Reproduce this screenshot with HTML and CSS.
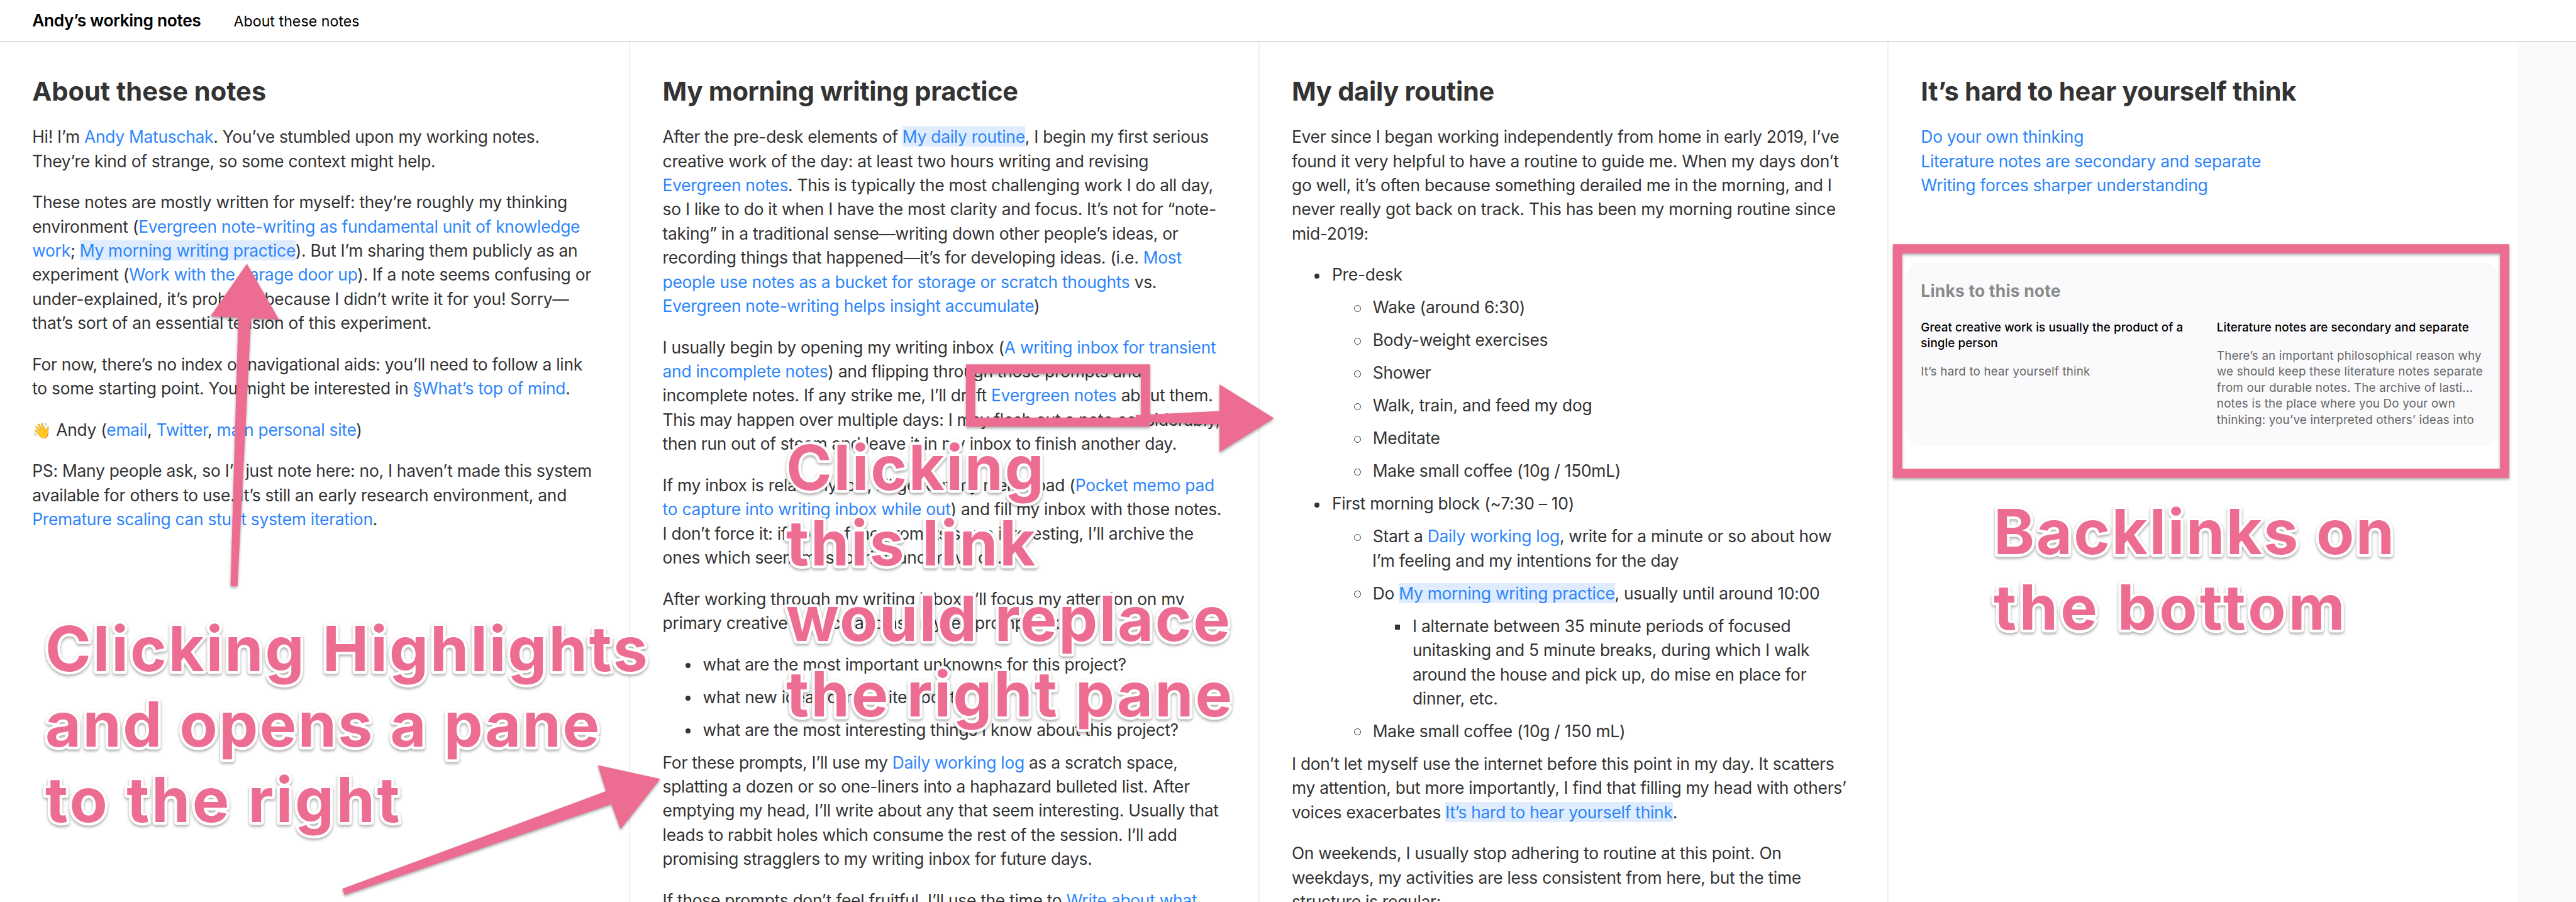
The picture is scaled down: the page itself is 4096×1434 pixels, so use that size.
FILE: index.html
```html
<!DOCTYPE html>
<html lang="en">
<head>
<meta charset="utf-8">
<title>Andy’s working notes</title>
<link rel="stylesheet" href="styles.css">
</head>
<body>
<header class="topbar">
  <a class="site-title">Andy’s working notes</a>
  <a class="nav-link">About these notes</a>
</header>
<main class="panes">
  <article class="note">
    <h1>About these notes</h1>
    <p>Hi! I’m <a>Andy Matuschak</a>. You’ve stumbled upon my working notes.<br>They’re kind of strange, so some context might help.</p>
    <p>These notes are mostly written for myself: they’re roughly my thinking<br>environment (<a>Evergreen note-writing as fundamental unit of knowledge<br>work</a>; <a class="open">My morning writing practice</a>). But I’m sharing them publicly as an<br>experiment (<a>Work with the garage door up</a>). If a note seems confusing or<br>under-explained, it’s probably because I didn’t write it for you! Sorry—<br>that’s sort of an essential tension of this experiment.</p>
    <p>For now, there’s no index or navigational aids: you’ll need to follow a link<br>to some starting point. You might be interested in <a>§What’s top of mind</a>.</p>
    <p><span class="wave">👋</span> Andy (<a>email</a>, <a>Twitter</a>, <a>main personal site</a>)</p>
    <p>PS: Many people ask, so I’ll just note here: no, I haven’t made this system<br>available for others to use. It’s still an early research environment, and<br><a>Premature scaling can stunt system iteration</a>.</p>
  </article>

  <article class="note">
    <h1>My morning writing practice</h1>
    <p>After the pre-desk elements of <a class="open">My daily routine</a>, I begin my first serious<br>creative work of the day: at least two hours writing and revising<br><a>Evergreen notes</a>. This is typically the most challenging work I do all day,<br>so I like to do it when I have the most clarity and focus. It’s not for “note-<br>taking” in a traditional sense—writing down other people’s ideas, or<br>recording things that happened—it’s for developing ideas. (i.e. <a>Most<br>people use notes as a bucket for storage or scratch thoughts</a> vs.<br><a>Evergreen note-writing helps insight accumulate</a>)</p>
    <p>I usually begin by opening my writing inbox (<a>A writing inbox for transient<br>and incomplete notes</a>) and flipping through those prompts and<br>incomplete notes. If any strike me, I’ll draft <a>Evergreen notes</a> about them.<br>This may happen over multiple days: I may flesh out a note considerably,<br>then run out of steam and leave it in my inbox to finish another day.</p>
    <p>If my inbox is relatively low, I’ll get out my memo pad (<a>Pocket memo pad<br>to capture into writing inbox while out</a>) and fill my inbox with those notes.<br>I don’t force it: if none of the prompts seem interesting, I’ll archive the<br>ones which seem most boring and move on.</p>
    <p>After working through my writing inbox, I’ll focus my attention on my<br>primary creative project, and ask myself prompts like:</p>
    <ul>
      <li>what are the most important unknowns for this project?</li>
      <li>what new ideas can I write about?</li>
      <li>what are the most interesting things I know about this project?</li>
    </ul>
    <p>For these prompts, I’ll use my <a>Daily working log</a> as a scratch space,<br>splatting a dozen or so one-liners into a haphazard bulleted list. After<br>emptying my head, I’ll write about any that seem interesting. Usually that<br>leads to rabbit holes which consume the rest of the session. I’ll add<br>promising stragglers to my writing inbox for future days.</p>
    <p>If those prompts don’t feel fruitful, I’ll use the time to <a>Write about what</a></p>
  </article>

  <article class="note">
    <h1>My daily routine</h1>
    <p>Ever since I began working independently from home in early 2019, I’ve<br>found it very helpful to have a routine to guide me. When my days don’t<br>go well, it’s often because something derailed me in the morning, and I<br>never really got back on track. This has been my morning routine since<br>mid-2019:</p>
    <ul>
      <li>Pre-desk
        <ul>
          <li>Wake (around 6:30)</li>
          <li>Body-weight exercises</li>
          <li>Shower</li>
          <li>Walk, train, and feed my dog</li>
          <li>Meditate</li>
          <li>Make small coffee (10g / 150mL)</li>
        </ul>
      </li>
      <li>First morning block (~7:30 – 10)
        <ul>
          <li>Start a <a>Daily working log</a>, write for a minute or so about how<br>I’m feeling and my intentions for the day</li>
          <li>Do <a class="open">My morning writing practice</a>, usually until around 10:00
            <ul>
              <li>I alternate between 35 minute periods of focused<br>unitasking and 5 minute breaks, during which I walk<br>around the house and pick up, do mise en place for<br>dinner, etc.</li>
            </ul>
          </li>
          <li>Make small coffee (10g / 150 mL)</li>
        </ul>
      </li>
    </ul>
    <p>I don’t let myself use the internet before this point in my day. It scatters<br>my attention, but more importantly, I find that filling my head with others’<br>voices exacerbates <a class="open">It’s hard to hear yourself think</a>.</p>
    <p>On weekends, I usually stop adhering to routine at this point. On<br>weekdays, my activities are less consistent from here, but the time<br>structure is regular:</p>
  </article>

  <article class="note">
    <h1>It’s hard to hear yourself think</h1>
    <p><a>Do your own thinking</a><br><a>Literature notes are secondary and separate</a><br><a>Writing forces sharper understanding</a></p>
    <section class="backlinks">
      <h2>Links to this note</h2>
      <div class="backlink-grid">
        <div class="backlink">
          <h3>Great creative work is usually the product of a<br>single person</h3>
          <div class="excerpt">It’s hard to hear yourself think</div>
        </div>
        <div class="backlink">
          <h3>Literature notes are secondary and separate</h3>
          <div class="excerpt">There’s an important philosophical reason why<br>we should keep these literature notes separate<br>from our durable notes. The archive of lasti...<br>notes is the place where you Do your own<br>thinking: you’ve interpreted others’ ideas into</div>
        </div>
      </div>
    </section>
  </article>
</main>

<svg class="annotations" viewBox="0 0 5118 1792" preserveAspectRatio="none">
  <g class="shapes">
    <polygon points="490.6,524 418,628.5 473.5,631.2 458,1164 471.8,1164.6 498.8,632.3 554.3,634.8"/>
    <polygon points="1311.8,1547.4 1187.8,1520.1 1204,1571.9 680,1765.9 684.9,1777.8 1214.7,1597.5 1232.7,1647.5"/>
    <rect class="box" x="1928.3" y="733" width="347.6" height="105.6"/>
    <polygon points="2531,830.6 2422.9,763.4 2422.9,816.8 2256.3,824.8 2256.3,838 2422.9,843.4 2422.9,898.3"/>
    <rect class="box" x="3770" y="494.2" width="1206.2" height="446.2"/>
  </g>
  <g class="callouts">
    <text x="90" y="1333.5" textLength="1197">Clicking Highlights</text>
    <text x="90" y="1483.5" textLength="1101">and opens a pane</text>
    <text x="90" y="1633.5" textLength="704">to the right</text>
    <text x="1562" y="973" textLength="512">Clicking</text>
    <text x="1562" y="1123" textLength="495">this link</text>
    <text x="1562" y="1273" textLength="882">would replace</text>
    <text x="1562" y="1423" textLength="886">the right pane</text>
    <text x="3961" y="1100.5" textLength="796">Backlinks on</text>
    <text x="3961" y="1250.5" textLength="698">the bottom</text>
  </g>
</svg>
</body>
</html>
```
FILE: styles.css
```css
* { box-sizing: border-box; }

body {
  margin: 0;
  width: 4096px;
  height: 1434px;
  overflow: hidden;
  position: relative;
  display: flex;
  flex-direction: column;
  background: #fafafc;
  color: #333;
  font: 400 26.4px/38.41px Inter, "Liberation Sans", sans-serif;
  letter-spacing: -0.275px;
}

.topbar {
  flex: none;
  height: 67px;
  padding: 8.5px 51.2px 0;
  display: flex;
  align-items: baseline;
  gap: 52px;
  background: #fff;
  border-bottom: 2px solid #dcdcdc;
  color: #000;
  line-height: 46px;
}
.site-title { font-weight: 600; letter-spacing: -0.38px; }
.nav-link { font-size: 23.2px; font-weight: 400; letter-spacing: 0.02px; }

.panes { display: flex; flex: 1; min-height: 0; }

.note {
  flex: none;
  width: 1000.4px;
  padding: 52.2px 51.2px 0;
  overflow: hidden;
  background: #fff;
  border-left: 2px solid #eee;
  white-space: nowrap;
}
.note:first-child { border-left: 0; }

h1 {
  margin: 0 0 27px;
  font-size: 41.6px;
  line-height: 52px;
  font-weight: 700;
  letter-spacing: -0.3px;
}
.note:first-child h1 { letter-spacing: 0; }

p { margin: 0 0 27.2px; }
.note a { color: #2e85fb; }
.note a.open { background: #dfecfd; }
.wave { font-size: 24.5px; letter-spacing: 0; line-height: 1; }

ul { margin: 0; padding-left: 64px; list-style: none; }
li { margin: 13.6px 0; }
li::before {
  content: "";
  display: inline-block;
  width: 8px;
  height: 8px;
  margin: 0 19.6px 0 -27.6px;
  vertical-align: 3.4px;
  border-radius: 50%;
  background: #333;
}
li li::before {
  width: 9px;
  height: 9px;
  margin: 0 19px 0 -29.2px;
  vertical-align: 2.8px;
  border: 1.6px solid #333;
  background: none;
}
li li li::before {
  width: 8px;
  height: 8px;
  margin: 0 19.6px 0 -27.6px;
  vertical-align: 3.4px;
  border: 0;
  border-radius: 0;
  background: #333;
}

.backlinks {
  margin: 103.5px -24px 0;
  height: 292px;
  padding: 29.2px 24px 0;
  border-radius: 26px;
  background: #fafafc;
}
.backlinks h2 {
  margin: 0 0 29.8px;
  font-size: 26.4px;
  line-height: 32px;
  font-weight: 700;
  letter-spacing: 0.2px;
  color: #8a8a8a;
}
.backlink-grid {
  display: grid;
  grid-template-columns: 1fr 1fr;
  gap: 45px;
  font-size: 18.8px;
  line-height: 25.6px;
}
.backlink h3 {
  margin: 0 0 19.2px;
  font-size: inherit;
  font-weight: 500;
  letter-spacing: 0.09px;
  color: #000;
}
.excerpt { color: #666; letter-spacing: 0.18px; }

.annotations {
  position: absolute;
  left: 0;
  top: 0;
  width: 4096px;
  height: 1434px;
}
.shapes {
  fill: #ed6c92;
  filter: drop-shadow(0 3px 2.5px rgba(0, 0, 0, .35));
}
.box { fill: none; stroke: #ed6c92; stroke-width: 18.2; }
.callouts {
  fill: #ed6c92;
  stroke: #fff;
  stroke-width: 11;
  stroke-linejoin: round;
  paint-order: stroke fill;
  font-size: 123px;
  font-weight: 700;
  letter-spacing: 0;
  filter: drop-shadow(0 3px 2.5px rgba(0, 0, 0, .35));
}
```
